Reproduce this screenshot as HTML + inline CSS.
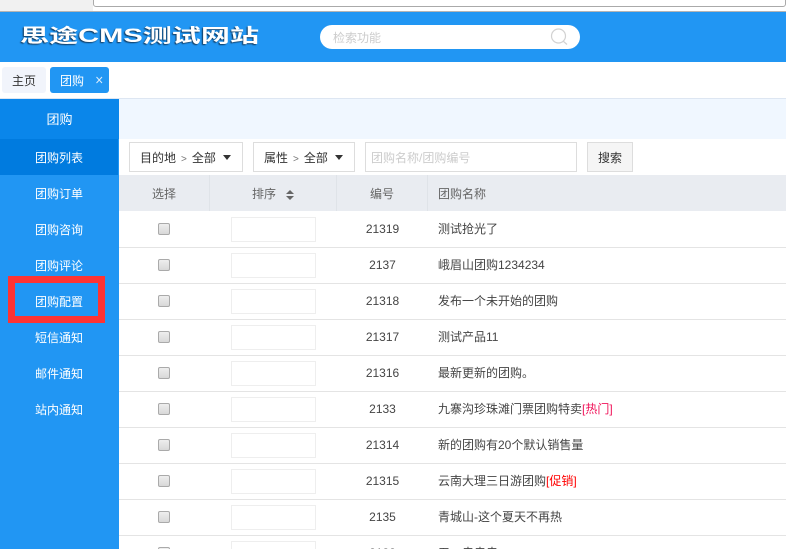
<!DOCTYPE html>
<html><head><meta charset="utf-8"><style>
*{box-sizing:border-box}
html,body{margin:0;padding:0;width:786px;height:549px;overflow:hidden}
body{background:#fff;font:12px/16px "Liberation Sans","Noto Sans CJK SC",sans-serif;color:#444}
#w{position:absolute;left:0;top:0;width:786px;height:549px;overflow:hidden}
.a{position:absolute}
.t{position:absolute;white-space:nowrap}
.nav{position:absolute;left:0;width:119px;height:36px;line-height:38px;text-align:center;color:#fff;padding-right:1px}
.box{position:absolute;border:1px solid #ddd;height:30px;top:142px;line-height:30px;background:#fff;white-space:nowrap}
.caret{position:absolute;width:0;height:0;border-left:4.5px solid transparent;border-right:4.5px solid transparent;border-top:5px solid #333;top:12px}
.row{position:absolute;left:119px;width:667px;height:36px;border-bottom:1px solid #e4e4e4}
.cb{position:absolute;left:39px;top:11px;width:12px;height:12px;border:1px solid #aaa;border-radius:2px;background:linear-gradient(#eee,#d8d8d8)}
.in{position:absolute;left:112px;top:5px;width:85px;height:25px;border:1px solid #eee;background:#fff}
.id{position:absolute;left:217px;width:93px;text-align:center;top:9px;line-height:16px;color:#444}
.nm{position:absolute;left:319px;top:9px;line-height:17px;white-space:nowrap;color:#444}
.th{position:absolute;top:175px;height:36px;line-height:38px;color:#666;white-space:nowrap}
.sep{position:absolute;top:175px;width:1px;height:36px;background:#dfe3e8}
.r{color:#f00}
.p{color:#f0145a}
.g{font-size:10px;color:#777;margin:0 5px 0 5px}
</style></head><body><div id="w">
<div class="a" style="left:0;top:0;width:786px;height:12px;background:#fff"></div>
<div class="a" style="left:0;top:0;width:93px;height:12px;background:#f1f1f1"></div>
<div class="a" style="left:93px;top:-4px;width:693px;height:11px;border:1px solid #aaa;border-radius:3px;background:#fff"></div>
<div class="a" style="left:0;top:11px;width:786px;height:1px;background:#b4b4b4"></div>

<div class="a" style="left:0;top:12px;width:786px;height:50px;background:#2196f3"></div>
<div class="t" style="left:19.5px;top:25px;line-height:24px;font-size:19px;font-weight:bold;color:#fff;text-shadow:-.7px 1px 1px #123a5e;transform:scaleX(1.53);transform-origin:0 50%">思途CMS测试网站</div>
<div class="a" style="left:320px;top:25px;width:260px;height:24px;background:#fff;border-radius:12px"></div>
<div class="t" style="left:333px;top:30px;color:#ccc">检索功能</div>
<svg class="a" style="left:550px;top:28px" width="19" height="19" viewBox="0 0 19 19" fill="none" stroke="#d2d2d2" stroke-width="1.2"><circle cx="8.5" cy="8" r="7"/><path d="M13 13L17 16.5"/></svg>

<div class="a" style="left:2px;top:67px;width:44px;height:26px;background:#f1f4fb;border-radius:3px;text-align:center;line-height:28px;color:#333">主页</div>
<div class="a" style="left:50px;top:67px;width:59px;height:26px;background:#2196f3;border-radius:3px;color:#fff;line-height:28px;padding-left:10px">团购</div>
<svg class="a" style="left:96px;top:76px" width="7" height="8" viewBox="0 0 7 8" stroke="#dcecfb" stroke-width="1"><path d="M.5 1L6 7M6 1L.5 7"/></svg>
<div class="a" style="left:0;top:98px;width:786px;height:1px;background:#dde6f2"></div>

<div class="a" style="left:0;top:99px;width:119px;height:450px;background:#2196f3"></div>
<div class="a" style="left:119px;top:99px;width:667px;height:40px;background:#f0f7ff"></div>
<div class="a" style="left:0;top:99px;width:119px;height:40px;background:#0a86ea;color:#fff;text-align:center;line-height:41px;font-size:13px">团购</div>
<div class="a" style="left:0;top:139px;width:118px;height:36px;background:#007bdf"></div>
<div class="nav" style="top:139px">团购列表</div>
<div class="nav" style="top:175px">团购订单</div>
<div class="nav" style="top:211px">团购咨询</div>
<div class="nav" style="top:247px">团购评论</div>
<div class="nav" style="top:283px">团购配置</div>
<div class="nav" style="top:319px">短信通知</div>
<div class="nav" style="top:355px">邮件通知</div>
<div class="nav" style="top:391px">站内通知</div>
<div class="a" style="left:8px;top:276px;width:97px;height:47px;border:7px solid #ff3333"></div>

<div class="box" style="left:129px;width:114px;padding-left:10px;color:#333">目的地<span class="g">&gt;</span>全部<i class="caret" style="left:93px"></i></div>
<div class="box" style="left:253px;width:102px;padding-left:10px;color:#333">属性<span class="g">&gt;</span>全部<i class="caret" style="left:81px"></i></div>
<div class="box" style="left:365px;width:212px;padding-left:5px;color:#ccc">团购名称/团购编号</div>
<div class="box" style="left:587px;width:46px;background:#f5f5f5;text-align:center;color:#333">搜索</div>

<div class="a" style="left:119px;top:175px;width:667px;height:36px;background:#e9ecf1"></div>
<div class="sep" style="left:209px"></div><div class="sep" style="left:336px"></div><div class="sep" style="left:427px"></div>
<div class="th" style="left:152px">选择</div>
<div class="th" style="left:252px">排序</div>
<svg class="a" style="left:286px;top:190px" width="8" height="10" viewBox="0 0 8 10" fill="#666"><path d="M4 0L8 4H0ZM0 6H8L4 10Z"/></svg>
<div class="th" style="left:370px">编号</div>
<div class="th" style="left:438px">团购名称</div>

<div class="row" style="top:212px"><i class="cb"></i><i class="in"></i><span class="id">21319</span><span class="nm">测试抢光了</span></div>
<div class="row" style="top:248px"><i class="cb"></i><i class="in"></i><span class="id">2137</span><span class="nm">峨眉山团购1234234</span></div>
<div class="row" style="top:284px"><i class="cb"></i><i class="in"></i><span class="id">21318</span><span class="nm">发布一个未开始的团购</span></div>
<div class="row" style="top:320px"><i class="cb"></i><i class="in"></i><span class="id">21317</span><span class="nm">测试产品11</span></div>
<div class="row" style="top:356px"><i class="cb"></i><i class="in"></i><span class="id">21316</span><span class="nm">最新更新的团购。</span></div>
<div class="row" style="top:392px"><i class="cb"></i><i class="in"></i><span class="id">2133</span><span class="nm">九寨沟珍珠滩门票团购特卖<span class="p">[热门]</span></span></div>
<div class="row" style="top:428px"><i class="cb"></i><i class="in"></i><span class="id">21314</span><span class="nm">新的团购有20个默认销售量</span></div>
<div class="row" style="top:464px"><i class="cb"></i><i class="in"></i><span class="id">21315</span><span class="nm">云南大理三日游团购<span class="r">[促销]</span></span></div>
<div class="row" style="top:500px"><i class="cb"></i><i class="in"></i><span class="id">2135</span><span class="nm">青城山-这个夏天不再热</span></div>
<div class="row" style="top:536px;border:0"><i class="cb"></i><i class="in"></i><span class="id">2132</span><span class="nm">五一走走走</span></div>
</div></body></html>
